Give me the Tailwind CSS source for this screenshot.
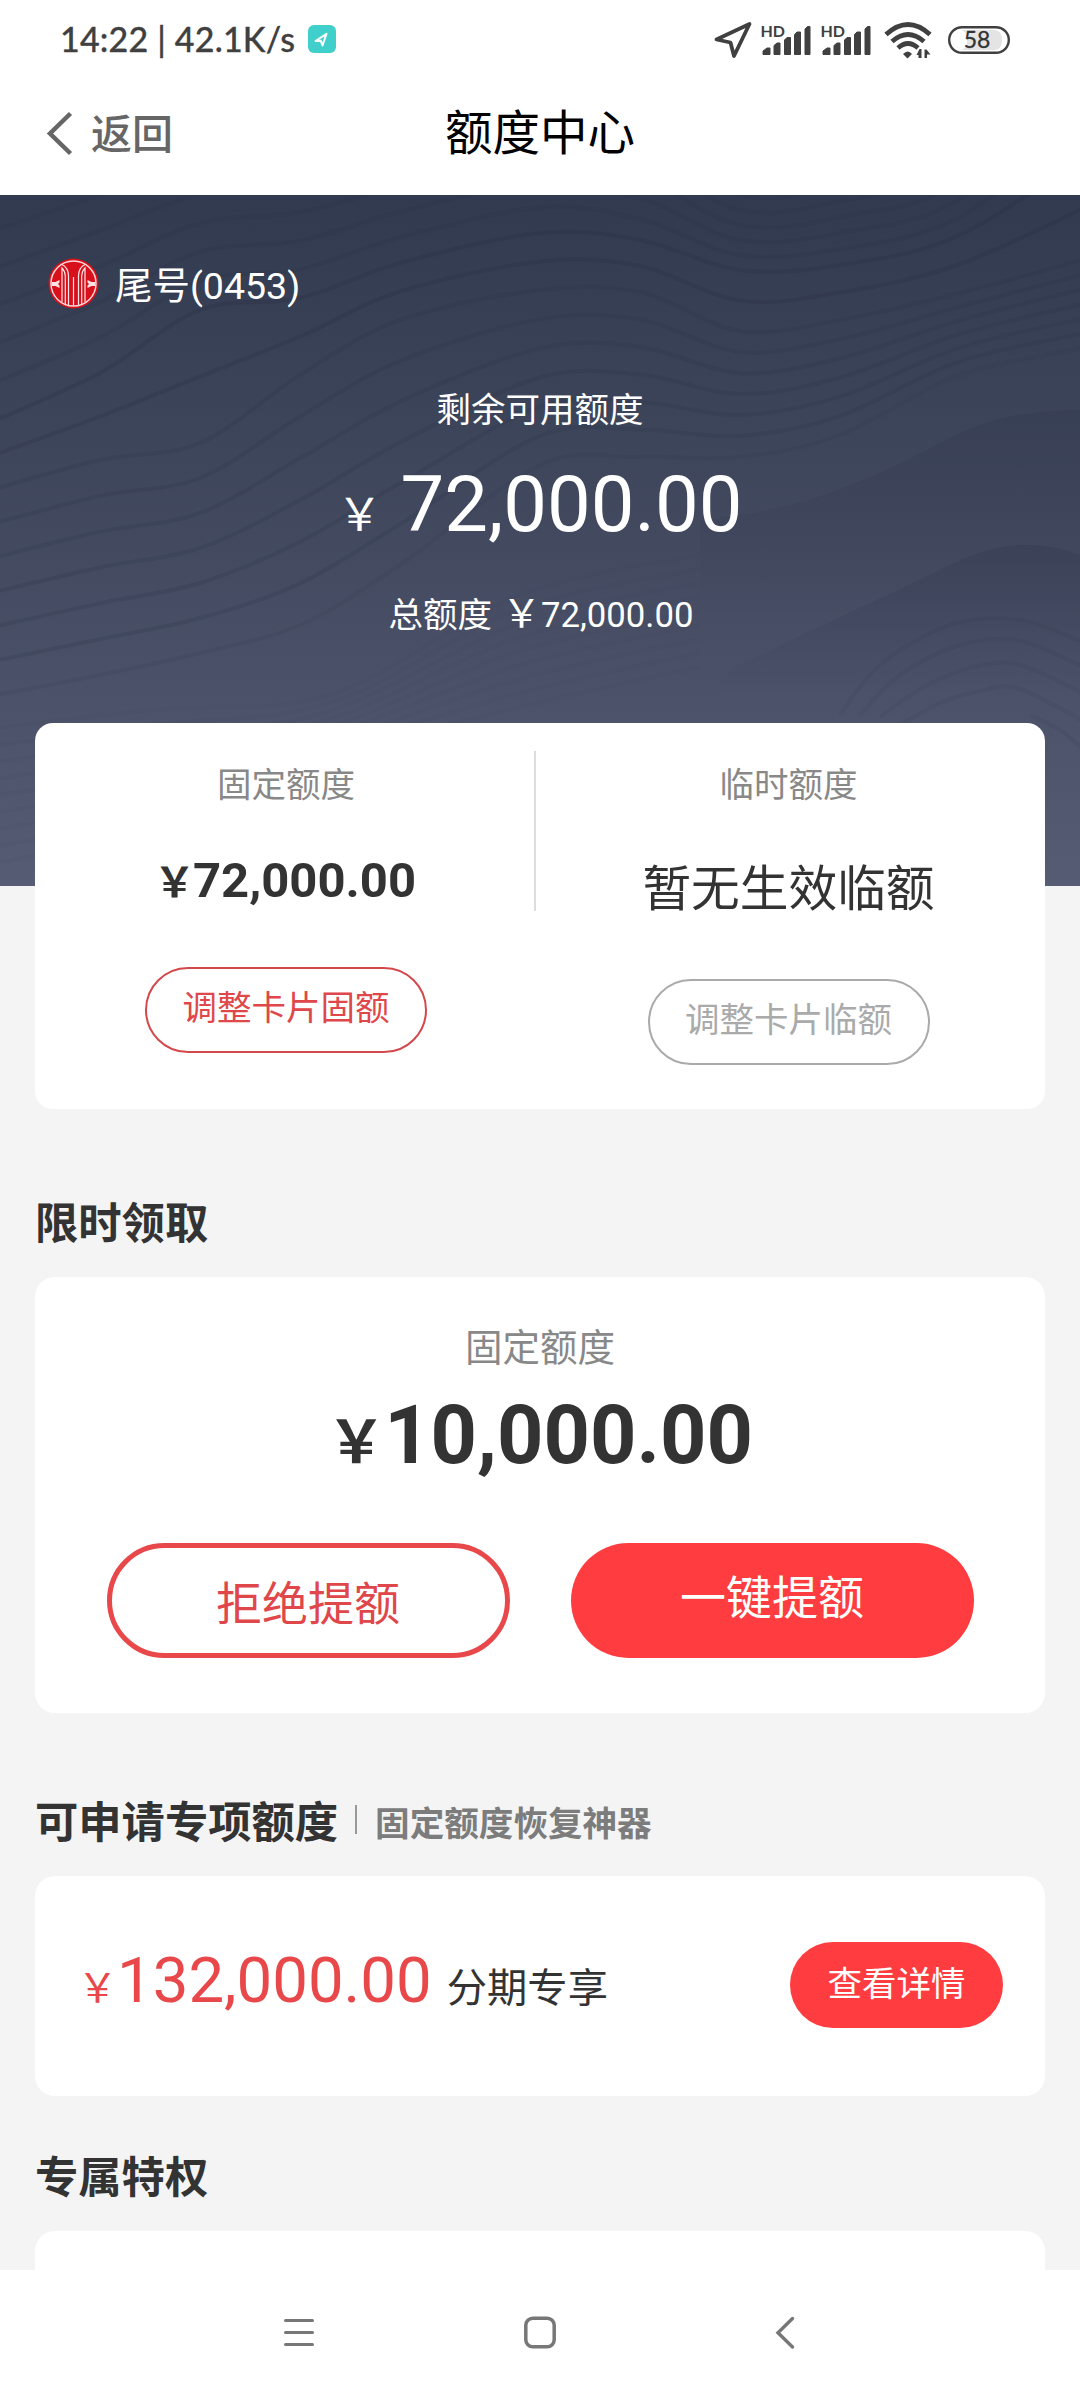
<!DOCTYPE html>
<html lang="zh-CN">
<head>
<meta charset="utf-8">
<title>额度中心</title>
<script src="https://cdn.jsdelivr.net/npm/@tailwindcss/browser@4"></script>
</head>
<body class="w-[1080px] h-[2400px] overflow-hidden bg-[#f4f4f4] text-[#333] font-[Roboto,'Noto_Sans_CJK_SC',sans-serif] flex flex-col">

<!-- status bar -->
<header class="h-[195px] shrink-0 bg-white">
  <div class="h-[80px] pl-[60px] pr-[70px] flex items-center justify-between text-[#404040]">
    <div class="flex items-center">
      <span class="w-[248px] -mt-[2px] whitespace-nowrap font-[Lato,sans-serif] text-[34px] leading-[78px] font-medium tracking-[0.2px] [-webkit-text-stroke:0.3px_#404040]">14:22 | 42.1K/s</span>
      <svg class="size-7 -mt-0.5" viewBox="0 0 28 28"><rect width="28" height="28" rx="6" fill="#40cfcb"/><path d="M7.5 16 18.5 8.800 14.500 20.500 12.800 15.800Z" fill="none" stroke="#fff" stroke-width="2" stroke-linejoin="round"/></svg>
    </div>
    <div class="flex items-center">
      <svg class="w-[38px] h-[38px]" viewBox="0 0 38 38"><path d="M2.500 18.500 35.500 3 20 35 16.500 21.500Z" fill="none" stroke="#404040" stroke-width="3.800" stroke-linejoin="round"/></svg>
      <svg class="ml-[9px] w-[51px] h-[36px] overflow-visible" viewBox="0 0 51 36" fill="#404040"><text x="-0.500" y="14.500" font-family="Lato" font-weight="700" font-size="16">HD</text><path d="M2 32.500V29l4-3h3v6.500zM13 32.500V23.500l3-2.500h3v11.500zM23.500 32.500V18l2.500-2.500h3.500v17zM33.500 32.500V12.500l2.500-2.500h3.500v22.500zM44 32.500V7l2.500-2.500h2.500v28z" stroke="#404040" stroke-width="1" stroke-linejoin="round"/></svg>
      <svg class="ml-[9px] w-[51px] h-[36px] overflow-visible" viewBox="0 0 51 36" fill="#404040"><text x="-0.500" y="14.500" font-family="Lato" font-weight="700" font-size="16">HD</text><path d="M2 32.500V29l4-3h3v6.500zM13 32.500V23.500l3-2.500h3v11.500zM23.500 32.500V18l2.500-2.500h3.500v17zM33.500 32.500V12.500l2.500-2.500h3.500v22.500zM44 32.500V7l2.500-2.500h2.500v28z" stroke="#404040" stroke-width="1" stroke-linejoin="round"/></svg>
      <svg class="ml-[12px] w-[48px] h-[38px]" viewBox="0 0 48 38"><g fill="none" stroke="#404040" stroke-width="4.800"><path d="M2 13.500Q24-6.500 46 13.500"/><path d="M8 20.500Q24 6.500 40 20.500"/><path d="M14 27Q24 18 34 27"/></g><path d="M19 33Q24 28 28 33L23.500 37.500Z" fill="#404040"/><path d="M37.500 28v9h-3v-3h-2l3-6zM40.500 37v-8.500h2l4 5h-3.500V37z" fill="#404040"/></svg>
      <svg class="ml-[16px] w-[62px] h-[28px]" viewBox="0 0 62 28"><path d="M14 4H46Q54 4 54 14T46 24H14Q5 24 5 14T14 4Z" fill="#e4e4e4"/><rect x="5" y="4" width="14" height="20" rx="8" fill="#fff"/><rect x="1.200" y="1.200" width="59.600" height="25.600" rx="12.800" fill="none" stroke="#404040" stroke-width="2.400"/><text x="29" y="21.800" text-anchor="middle" font-family="Lato" font-size="23" font-weight="400" fill="#333" stroke="#333" stroke-width=".3">58</text></svg>
    </div>
  </div>
  <!-- title bar -->
  <div class="grid grid-cols-3 items-center h-[108px] pl-[45px] pr-[45px]">
    <div class="flex items-center gap-[18px] text-[#666]">
      <svg class="w-[28px] h-[46px]" viewBox="0 0 28 46"><path d="M25.500 2.500 5 22.500 25.500 42.500" fill="none" stroke="#666" stroke-width="4.500"/></svg>
      <span class="text-[41px] leading-[60px] pt-[1px] font-medium">返回</span>
    </div>
    <h1 class="text-center text-[47.500px] leading-[60px] text-black">额度中心</h1>
  </div>
</header>

<!-- available limit -->
<section class="relative h-[691px] shrink-0 bg-linear-to-b from-[#313a4e] via-[#434a60] to-[#565c73] text-white overflow-hidden">
  <svg class="absolute inset-0" width="1080" height="691" viewBox="0 0 1080 691" fill="none">
    <defs>
      <linearGradient id="fold" x1="0" y1="0" x2="0" y2="1"><stop offset="0" stop-color="#33394f" stop-opacity=".4"/><stop offset=".6" stop-color="#33394f" stop-opacity="0"/></linearGradient>
    </defs>
    <path d="M700 325C800 318 880 280 940 248S1030 218 1080 214V560H700Z" fill="url(#fold)"/>
    <path d="M720 480C820 430 900 395 950 370S1040 345 1080 360V600H720Z" fill="url(#fold)"/>
    <g id="waves" stroke="#2a3047" stroke-width="4"></g>
  </svg>
  <div class="relative flex flex-col items-center">
    <div class="self-stretch flex items-center pl-[48px] pt-[60px] gap-[16px]">
      <svg class="size-[51px]" viewBox="0 0 51 51" fill="none"><circle cx="25.500" cy="25.500" r="25" fill="#d7101c"/><circle cx="25.500" cy="25.500" r="22.500" stroke="#fbd9d9" stroke-width="1.500"/><path d="M14 6.500C19 9 20.500 13 20.500 18V47M37 6.500C32 9 30.500 13 30.500 18V47M17.300 46V18Q17 13 14 10V44M33.700 46V18Q34 13 37 10V44M25.500 19V47.500" stroke="#fde6e6" stroke-width="1.200"/><path d="M4 24h3.500l4-2v2.500q-2.500 1.500 0 3V30l-4-2H4zM47 24h-3.500l-4-2v2.500q2.500 1.500 0 3V30l4-2H47z" fill="#fbe3e3"/></svg>
      <span class="text-[37.500px] leading-[50px] pt-[6px]">尾号(0453)</span>
    </div>
    <div class="mt-[74px] text-[34.500px] leading-[50px]">剩余可用额度</div>
    <div class="mt-[25px] flex items-baseline leading-[90px] pl-[8px]">
      <span class="w-[28px] flex justify-center text-[45px]">￥</span>
      <span class="ml-[27px] text-[77.800px]">72,000.00</span>
    </div>
    <div class="mt-[28px] flex items-baseline leading-[50px] pl-[2px]">
      <span class="text-[34.500px]">总额度</span>
      <span class="ml-[17px] w-[25px] flex justify-center text-[39px]">￥</span>
      <span class="ml-[7px] text-[34.700px]">72,000.00</span>
    </div>
  </div>
</section>

<!-- fixed / temporary limit -->
<section class="relative mx-[35px] -mt-[163px] h-[386px] shrink-0 rounded-[18px] bg-white flex">
  <div class="w-[499px] flex flex-col items-center pt-[37px] pl-[3px]">
    <div class="text-[34.500px] leading-[50px] text-[#888]">固定额度</div>
    <div class="mt-[41px] flex items-baseline font-bold leading-[60px] pl-[5px]">
      <span class="w-[27px] flex justify-center text-[41px]">￥</span>
      <span class="ml-[5px] text-[49px]">72,000.00</span>
    </div>
    <button class="mt-[54px] w-[282px] h-[86px] rounded-full border-2 border-[#d3484b] pb-[3px] text-[34.500px] text-[#e0474a]">调整卡片固额</button>
  </div>
  <div class="w-[2px] h-[160px] mt-[28px] bg-[#ddd]"></div>
  <div class="flex-1 flex flex-col items-center pt-[37px] pr-[4px]">
    <div class="text-[34.500px] leading-[50px] text-[#888]">临时额度</div>
    <div class="mt-[50px] text-[48.700px] leading-[60px]">暂无生效临额</div>
    <button class="mt-[59px] w-[282px] h-[86px] rounded-full border-2 border-[#aaa] pb-[2px] text-[34.500px] text-[#aaa]">调整卡片临额</button>
  </div>
</section>

<!-- limited-time offer -->
<h2 class="mt-[86px] ml-[35px] text-[43.300px] leading-[60px] font-bold shrink-0">限时领取</h2>
<section class="mt-[22px] mx-[35px] h-[436px] shrink-0 rounded-[20px] bg-white flex flex-col items-center">
  <div class="mt-[46px] text-[37.500px] leading-[50px] text-[#888]">固定额度</div>
  <div class="mt-[18px] flex items-baseline font-bold leading-[90px] pl-[9px]">
    <span class="w-[40px] flex justify-center text-[59px]">￥</span>
    <span class="ml-[8px] text-[81px]">10,000.00</span>
  </div>
  <div class="mt-[55px] flex gap-[61px]">
    <button class="w-[403px] h-[115px] rounded-full border-[5px] border-[#e8484a] text-[46px] leading-[105px] text-[#e0474a] pt-[4px]">拒绝提额</button>
    <button class="w-[403px] h-[115px] rounded-full bg-[#ff3d40] text-[46px] text-white pb-[4px]">一键提额</button>
  </div>
</section>

<!-- special limit -->
<div class="mt-[81px] ml-[35px] h-[60px] flex items-center shrink-0">
  <h2 class="text-[43.300px] leading-[60px] font-bold">可申请专项额度</h2>
  <i class="ml-[17px] -mt-[9px] w-[2px] h-[29px] bg-[#999]"></i>
  <h3 class="ml-[18px] text-[34.600px] leading-[60px] font-bold text-[#7c7c7c]">固定额度恢复神器</h3>
</div>
<section class="mt-[22px] mx-[35px] h-[220px] shrink-0 rounded-[20px] bg-white pl-[50px] pr-[42px] flex justify-between">
  <div class="flex items-baseline pt-[65px] leading-[80px]">
    <span class="w-[25px] flex justify-center text-[40px] text-[#e8484a]">￥</span>
    <span class="ml-[7px] text-[63.500px] text-[#e8484a]">132,000.00</span>
    <span class="ml-[15px] text-[40.300px]">分期专享</span>
  </div>
  <button class="mt-[66px] w-[213px] h-[86px] rounded-full bg-[#ff3d40] text-[34.500px] text-white pb-[1px]">查看详情</button>
</section>

<!-- privileges -->
<h2 class="mt-[53px] ml-[35px] text-[43.300px] leading-[60px] font-bold shrink-0">专属特权</h2>
<section class="mt-[22px] mx-[35px] h-[39px] shrink-0 rounded-t-[20px] bg-white"></section>

<!-- navigation bar -->
<nav class="h-[130px] shrink-0 bg-white pt-[42px] pl-[282px] flex items-start">
  <svg class="w-[34px] h-[40px]" viewBox="0 0 34 40" stroke="#777" stroke-width="3" stroke-linecap="round"><path d="M3.500 8.500h27M3.500 20.500h27M3.500 32.500h27"/></svg>
  <svg class="ml-[206px] w-[36px] h-[40px]" viewBox="0 0 36 40" fill="none"><rect x="3.800" y="6.300" width="28.400" height="28.400" rx="7" stroke="#777" stroke-width="3.500"/></svg>
  <svg class="ml-[216px] w-[24px] h-[40px]" viewBox="0 0 24 40" fill="none"><path d="M18.500 6.500 4 20.800 18.500 35" stroke="#777" stroke-width="3.400" stroke-linecap="round"/></svg>
</nav>

<script>
// contour lines of the header, interpolated between a few guide curves
const xs = [-20, 100, 200, 300, 400, 540, 640, 740, 840, 960, 1100];
const guides = [
  { y: [40, 0, -30, -40, -60, -90, -60, 0, -10, -50, -220], n: 5, o: 0.2 },
  { y: [232, 178, 115, 103, 68, 38, 45, 75, 70, 40, -50], n: 2, o: 0.26 },
  { y: [298, 265, 248, 180, 125, 95, 97, 136, 125, 98, 60], n: 6, o: 0.2 },
  { y: [503, 480, 458, 430, 370, 270, 262, 262, 240, 180, 150], n: 1, o: 0.1 },
];
const bump = [
  [[840, 520], [880, 470], [950, 430], [1020, 425], [1090, 450]],
  [[860, 520], [900, 480], [960, 450], [1020, 446], [1090, 475]],
  [[880, 522], [920, 494], [970, 473], [1020, 470], [1090, 502]],
  [[900, 530], [940, 508], [980, 496], [1020, 494], [1090, 530]],
  [[1030, 520], [1060, 535], [1090, 560]],
];
const waves = document.getElementById('waves');
function curve(p, o) {
  let d = `M${p[0]}`;
  for (let i = 0; i < p.length - 1; i++) {
    const a = p[i - 1] || p[i], b = p[i], c = p[i + 1], e = p[i + 2] || c;
    d += `C${b[0] + (c[0] - a[0]) / 6},${b[1] + (c[1] - a[1]) / 6} ${c[0] - (e[0] - b[0]) / 6},${c[1] - (e[1] - b[1]) / 6} ${c}`;
  }
  const el = document.createElementNS('http://www.w3.org/2000/svg', 'path');
  el.setAttribute('d', d);
  el.setAttribute('stroke-opacity', o);
  waves.appendChild(el);
}
guides.forEach((g, k) => {
  const next = guides[k + 1] || g;
  for (let j = 0; j < g.n; j++) {
    const t = j / g.n;
    curve(xs.map((x, i) => [x, g.y[i] * (1 - t) + next.y[i] * t]), g.o);
  }
});
bump.forEach(p => curve(p, 0.09));
for (let j = 0; j < 9; j++) curve([[-20, 535 + j * 17], [150, 515 + j * 15], [330, 500 + j * 8], [520, 400 + j * 14], [700, 360 + j * 14]], 0.04);
</script>
</body>
</html>
